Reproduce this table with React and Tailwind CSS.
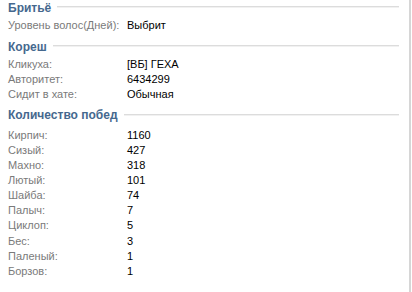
const sections = [
  {
    title: "Бритьё",
    cls: "",
    rows: [["Уровень волос(Дней):", "Выбрит"]],
  },
  {
    title: "Кореш",
    cls: "mt-[6px]",
    rows: [
      ["Кликуха:", "[ВБ] ГЕХА"],
      ["Авторитет:", "6434299"],
      ["Сидит в хате:", "Обычная"],
    ],
  },
  {
    title: "Количество побед",
    cls: "mt-[5px]",
    rows: [
      ["Кирпич:", "1160"],
      ["Сизый:", "427"],
      ["Махно:", "318"],
      ["Лютый:", "101"],
      ["Шайба:", "74"],
      ["Палыч:", "7"],
      ["Циклоп:", "5"],
      ["Бес:", "3"],
      ["Паленый:", "1"],
      ["Борзов:", "1"],
    ],
  },
];

const Header = ({ title }) => (
  <div className="flex items-center h-4 pl-2 pr-[10px]">
    <span className="font-bold text-[12px] text-[#45688e] whitespace-nowrap">{title}</span>
    <div className="flex-1 ml-[6px] mb-[2px] flex flex-col">
      <div className="h-px bg-[#dcdcdc]" />
      <div className="h-px bg-[#f1f1f1]" />
    </div>
  </div>
);

export default function App() {
  return (
    <div className="w-[412px] h-[292px] bg-white">
      <div
        className="w-[411px] h-[292px] border-r-2 border-[#d6d6d6] text-[11px] leading-[15px]"
        style={{ fontFamily: '"Liberation Sans", Arial, sans-serif' }}
      >
        {sections.map((s, i) => (
          <div key={s.title} className={s.cls}>
            <Header title={s.title} />
            <div className={i === 2 ? "mt-[4px]" : "mt-[2px]"}>
              {s.rows.map(([label, value]) => (
                <div key={label} className="grid grid-cols-[119px_1fr] pl-2 h-[15.15px]">
                  <span className="text-[#7a7a7a] whitespace-nowrap">{label}</span>
                  <span className="text-black">{value}</span>
                </div>
              ))}
            </div>
          </div>
        ))}
      </div>
    </div>
  );
}
